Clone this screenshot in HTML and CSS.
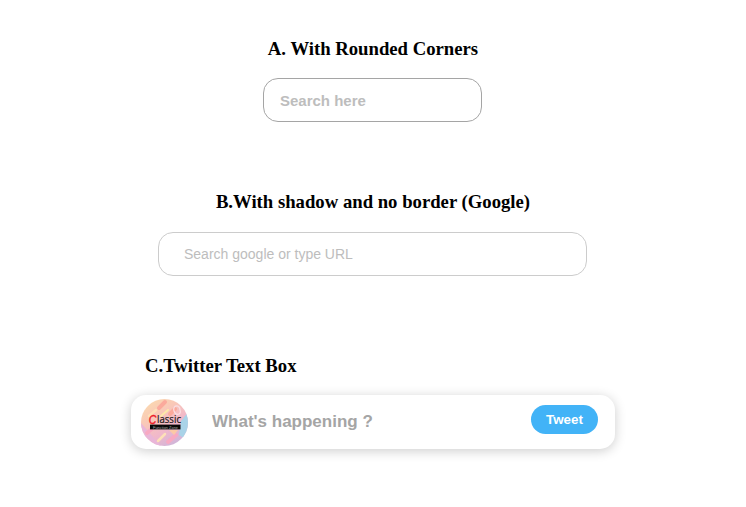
FILE: index.html
```html
<!DOCTYPE html>
<html lang="en">
<head>
<meta charset="utf-8">
<title>Text boxes</title>
<link rel="stylesheet" href="styles.css">
</head>
<body>
<section class="group rounded">
  <h3>A. With Rounded Corners</h3>
  <input class="box box-rounded" type="text" placeholder="Search here">
</section>
<section class="group google">
  <h3>B.With shadow and no border (Google)</h3>
  <input class="box box-google" type="text" placeholder="Search google or type URL">
</section>
<section class="twitter">
  <h3>C.Twitter Text Box</h3>
  <div class="composer">
    <svg class="avatar" viewBox="0 0 47 47" aria-hidden="true">
      <defs>
        <linearGradient id="sky" x1="0.1" y1="0" x2="0.8" y2="1">
          <stop offset="0" stop-color="#fbdcae"/>
          <stop offset="0.35" stop-color="#f9c8b8"/>
          <stop offset="0.65" stop-color="#f0b7cb"/>
          <stop offset="1" stop-color="#c9b5dc"/>
        </linearGradient>
        <clipPath id="disc"><circle cx="23.5" cy="23.5" r="23.5"/></clipPath>
      </defs>
      <g clip-path="url(#disc)">
        <rect width="47" height="47" fill="url(#sky)"/>
        <g class="art">
          <path d="M48 12V42L38 36L40 22Z" fill="#a9d3e8"/>
          <path d="M0 24L20 47H0Z" fill="#e9b6d8"/>
          <g fill="none" stroke-linecap="round">
            <path d="M18 9L24 3M29 15L34 10" stroke="#fbaa9c" stroke-width="4"/>
            <path d="M8 17L15 11M17 42L24 35" stroke="#fde0b8" stroke-width="2.5"/>
            <path d="M20 17L27 11" stroke="#fdeaa8" stroke-width="2"/>
            <path d="M6 34L12 29M27 43L35 36" stroke="#f8a9c2" stroke-width="4"/>
            <path d="M33 12C31 6 39 5 39 11C41 15 35 18 33 12" stroke="#fadde1" stroke-width="1.3"/>
          </g>
          <path d="M28 31L37 31L33 36Z" fill="#fcc9a5"/>
        </g>
        <text class="logo-initial" x="7.8" y="25" textLength="7.6" lengthAdjust="spacingAndGlyphs">C</text>
        <text class="logo-word" x="16" y="24.3" textLength="24" lengthAdjust="spacingAndGlyphs">lassic</text>
        <rect x="9" y="25.6" width="30.5" height="4.8" fill="#080808"/>
        <text class="logo-tag" x="12" y="29.6" textLength="25" lengthAdjust="spacingAndGlyphs">Function Zone</text>
      </g>
    </svg>
    <input class="message" type="text" placeholder="What's happening ?">
    <button class="tweet" type="button">Tweet</button>
  </div>
</section>
</body>
</html>
```
FILE: styles.css
```css
* { box-sizing: border-box; }
body {
  margin: 0;
  min-height: 507px;
  padding-top: 38px;
  background: #fff;
  font-family: "Liberation Serif", serif;
}
h3 {
  margin: 0;
  font-size: 18.72px;
  line-height: 22px;
  color: #000;
}
.group {
  display: flex;
  flex-direction: column;
  align-items: center;
}
.group h3 { padding-left: 1px; }
input {
  font-family: "Liberation Sans", sans-serif;
  background: #fff;
  outline: none;
}
.box {
  height: 44px;
  border-radius: 15px;
}
.rounded { gap: 18px; height: 153px; padding-right: 1px; }
.google { gap: 19px; height: 164px; padding-right: 1px; }
.box-rounded {
  width: 219px;
  border: 1px solid #a5a5a5;
  padding: 1px 16px;
  font-size: 15px;
  font-weight: bold;
}
.box-google {
  width: 429px;
  border: 1px solid #ccc;
  padding: 1px 25px;
  font-size: 14px;
}
.box::placeholder { color: #bdbdbd; }
.twitter { width: 484px; margin-left: 131px; padding-bottom: 40px; }
.twitter h3 { padding-left: 14px; }
.composer {
  display: flex;
  height: 54px;
  margin-top: 18px;
  padding: 4px 17px 0 10px;
  border-radius: 15px;
  box-shadow: 0 2px 12px rgba(0, 0, 0, .2);
}
.avatar { width: 47px; height: 47px; flex: none; }
.art { filter: blur(.6px); }
.logo-initial { font: italic 13px "Liberation Sans", sans-serif; fill: #ed2027; stroke: #ed2027; stroke-width: .4px; }
.logo-word { font: 10px "Open Sans", sans-serif; fill: #171717; stroke: #171717; stroke-width: .2px; }
.logo-tag { font: 4px "Liberation Sans", sans-serif; fill: #aaa; }
.message {
  flex: 1;
  min-width: 0;
  height: 45px;
  padding: 0 0 0 24px;
  border: 0;
  font-size: 17px;
  font-weight: bold;
}
.message::placeholder { color: #a5a5a5; }
.tweet {
  width: 67px;
  height: 29px;
  margin-top: 6px;
  padding: 0;
  border: 0;
  border-radius: 15px;
  background: #42b3f7;
  color: #fff;
  font: bold 13.333px "Liberation Sans", sans-serif;
}
```
